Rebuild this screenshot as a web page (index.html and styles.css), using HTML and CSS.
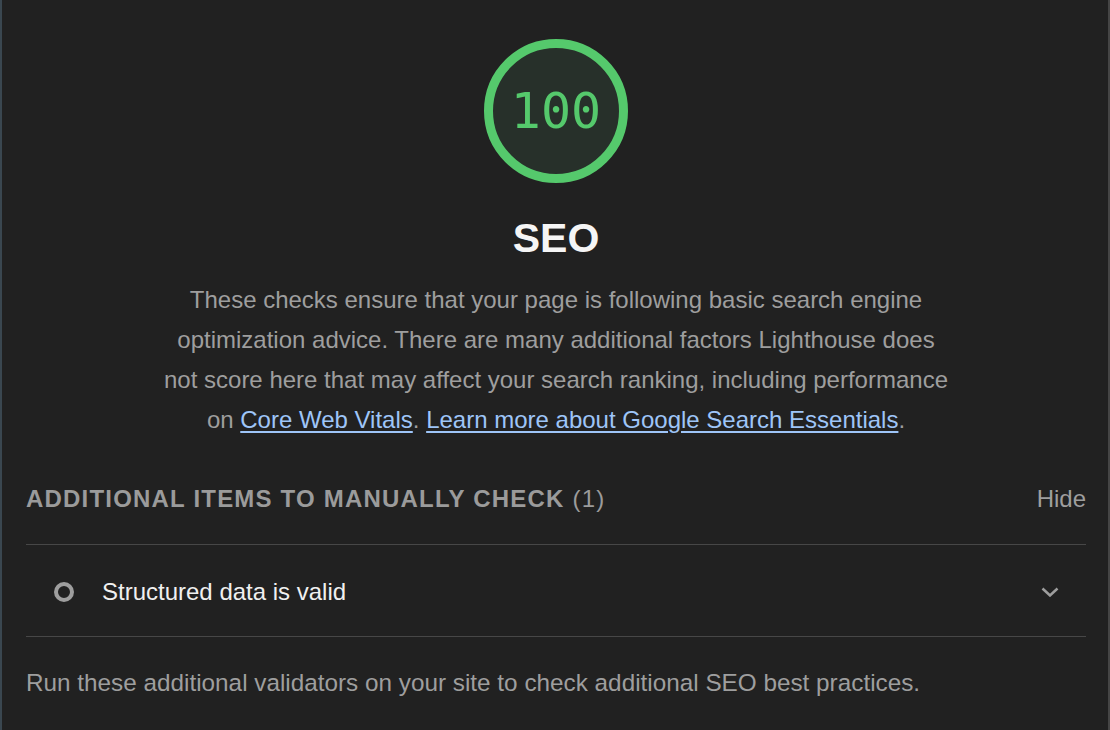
FILE: index.html
```html
<!DOCTYPE html>
<html lang="en">
<head>
<meta charset="utf-8">
<title>SEO</title>
<link rel="stylesheet" href="styles.css">
</head>
<body>
<main class="category">
  <div class="gauge">
    <svg class="gauge-arc" viewBox="0 0 144 144" width="144" height="144">
      <circle cx="72" cy="72" r="67.5" class="gauge-base"></circle>
    </svg>
    <span class="gauge-value">100</span>
  </div>
  <h1 class="category-title">SEO</h1>
  <p class="category-desc">These checks ensure that your page is following basic search engine optimization advice. There are many additional factors Lighthouse does not score here that may affect your search ranking, including performance on <a href="#">Core Web Vitals</a>. <a href="#">Learn more about Google Search Essentials</a>.</p>

  <div class="group-header">
    <span class="group-title">Additional items to manually check <span class="group-count">(1)</span></span>
    <span class="group-toggle">Hide</span>
  </div>
  <div class="audit">
    <span class="audit-icon"></span>
    <span class="audit-title">Structured data is valid</span>
    <svg class="chevron" viewBox="0 0 18 10" width="18" height="10">
      <path d="M1.5 1.5 L9 8.5 L16.5 1.5" />
    </svg>
  </div>
  <p class="group-desc">Run these additional validators on your site to check additional SEO best practices.</p>
</main>
</body>
</html>
```
FILE: styles.css
```css
html, body {
  margin: 0;
  padding: 0;
}
body {
  background: #212121;
  width: 1110px;
  height: 730px;
  box-sizing: border-box;
  border-left: 2px solid #3a4750;
  border-right: 2px solid #454545;
  font-family: "Liberation Sans", Arial, sans-serif;
  overflow: hidden;
}
.category {
  padding: 0 22px 0 24px;
}
.gauge {
  position: relative;
  width: 144px;
  height: 144px;
  margin: 39px auto 0;
}
.gauge-arc {
  display: block;
}
.gauge-base {
  fill: #27302a;
  stroke: #55c96c;
  stroke-width: 9;
}
.gauge-value {
  position: absolute;
  inset: 0;
  display: flex;
  align-items: center;
  justify-content: center;
  font-family: "DejaVu Sans Mono", monospace;
  font-size: 50px;
  color: #55c96c;
}
.category-title {
  margin: 31px 0 0;
  text-align: center;
  font-size: 41px;
  line-height: 48px;
  font-weight: bold;
  color: #f5f5f5;
}
.category-desc {
  margin: 18px auto 0;
  max-width: 790px;
  text-align: center;
  font-size: 24px;
  line-height: 40px;
  color: #9e9e9e;
}
.category-desc a {
  color: #9ec5f8;
  text-decoration: underline;
  text-underline-offset: 3px;
}
.group-header {
  display: flex;
  justify-content: space-between;
  align-items: center;
  margin-top: 45px;
  padding-bottom: 31px;
  border-bottom: 1px solid #474747;
  line-height: 28px;
}
.group-title {
  font-size: 24px;
  font-weight: bold;
  letter-spacing: 1.2px;
  text-transform: uppercase;
  color: #9b9b9b;
}
.group-count {
  font-weight: normal;
}
.group-toggle {
  font-size: 24px;
  color: #9e9e9e;
}
.audit {
  display: flex;
  align-items: center;
  height: 92px;
  padding: 2px 27px 0 28px;
  box-sizing: border-box;
  border-bottom: 1px solid #474747;
}
.audit-icon {
  width: 20px;
  height: 20px;
  box-sizing: border-box;
  border: 4px solid #9e9e9e;
  border-radius: 50%;
  flex: none;
}
.audit-title {
  flex: 1;
  margin-left: 28px;
  font-size: 24px;
  color: #f0f0f0;
}
.chevron {
  fill: none;
  stroke: #9e9e9e;
  stroke-width: 2.5;
}
.group-desc {
  margin: 32px 0 0;
  font-size: 24.3px;
  line-height: 28px;
  color: #9e9e9e;
}
```
